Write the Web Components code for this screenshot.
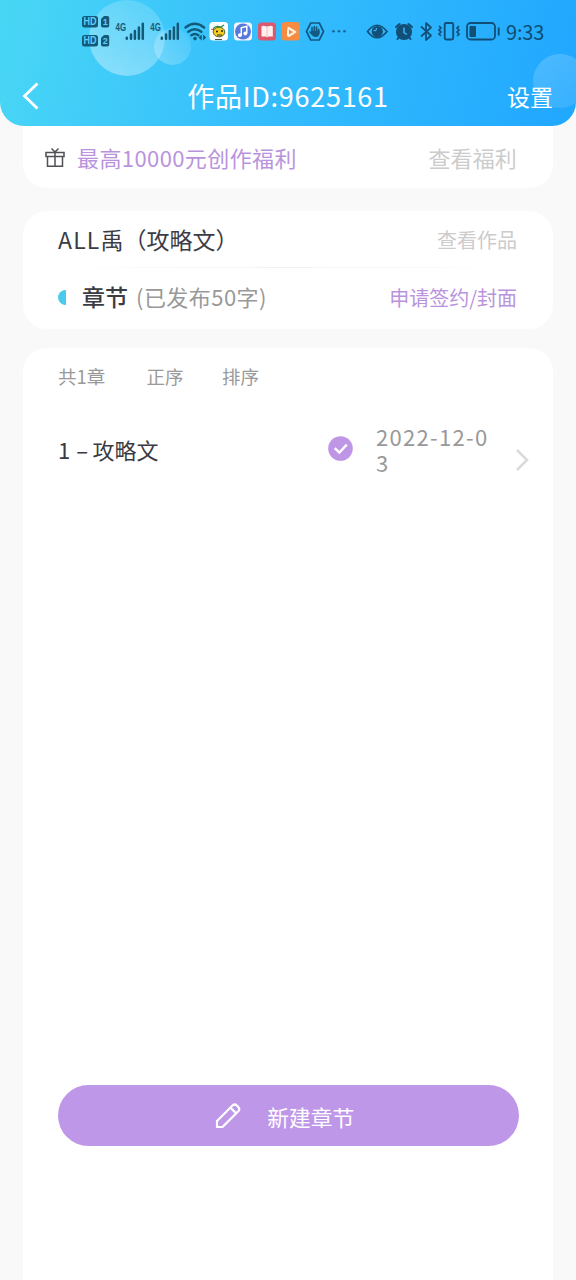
<!DOCTYPE html>
<html lang="zh-CN">
<head>
<meta charset="utf-8">
<title>作品</title>
<style>
html,body{margin:0;height:100%;background:#f9f9f9}
body{font-family:"Noto Sans CJK SC","Noto Sans",sans-serif;color:#3c3c44;overflow:hidden}
</style>
</head>
<body>
<work-page></work-page>
<script>
const define=(name,html)=>customElements.define(name,class extends HTMLElement{
  constructor(){super();const t=document.createElement('template');t.innerHTML=html;
    this.attachShadow({mode:'open'}).append(t.content.cloneNode(true));}
});

define('status-bar',`<style>
:host{display:flex;height:64px;padding-left:80px;box-sizing:border-box;align-items:center;color:#104e73}
svg{display:block;width:422px;height:64px;flex:none}
.time{font-size:20px;line-height:24px;margin:0 0 0 4px;letter-spacing:-.2px}
text{font-family:"Liberation Sans",sans-serif;font-weight:700}
</style>
<svg viewBox="80 0 422 64">
 <g fill="#135a78">
  <rect x="82" y="16" width="16" height="11.5" rx="2.5"/><rect x="82" y="35" width="16" height="11.5" rx="2.5"/>
  <path d="M104 16h3.500q1.700 0 1.700 1.700v8.100q0 1.700-1.700 1.700h-4.800q-1.700 0-1.700-1.700V19z"/><path d="M104 35h3.500q1.700 0 1.700 1.700v8.100q0 1.700-1.700 1.700h-4.800q-1.700 0-1.700-1.700V38z"/>
 </g>
 <g fill="#62cdf8"><text x="83.500" y="25.300" font-size="10" textLength="13" lengthAdjust="spacingAndGlyphs">HD</text><text x="83.500" y="44.300" font-size="10" textLength="13" lengthAdjust="spacingAndGlyphs">HD</text><text x="102.700" y="25.200" font-size="9">1</text><text x="102.700" y="44.200" font-size="9">2</text></g>
 <g fill="#135a78"><text x="115.500" y="30.700" font-size="11.500" textLength="10.500" lengthAdjust="spacingAndGlyphs">4G</text><text x="150.300" y="30.700" font-size="11.500" textLength="10.500" lengthAdjust="spacingAndGlyphs">4G</text></g>
 <g stroke="#135a78" stroke-width="2.500" stroke-linecap="round">
  <path d="M126.800 37.700v1M131 34.500v4.200M134.900 31v7.700M138.900 27.500v11.200M142.800 23.800v14.900"/>
  <path d="M161.800 37.700v1M166 34.500v4.200M169.900 31v7.700M173.900 27.500v11.200M177.800 23.800v14.900"/>
 </g>
 <g fill="none" stroke="#135a78" stroke-width="2.400" stroke-linecap="round"><path d="M185.500 27.500q9.300-7.300 18.600 0M188.300 31.700q6.500-4.800 13 0M191.400 35.300q3.500-2.600 7 0"/></g>
 <circle cx="195" cy="38.600" r="1.800" fill="#135a78"/><path d="M201.700 34.500v6l-3.200-3zM203 34.500v6l3.200-3z" fill="#135a78"/>
 <rect x="209.500" y="22" width="18.500" height="18.500" rx="3.500" fill="#fff"/>
 <path d="M215 39.500h7" stroke="#555"/><ellipse cx="219" cy="32" rx="5.800" ry="4.800" fill="#f5cf22" stroke="#52642c"/><path d="M213 30q1-5 8-3l3-2" fill="none" stroke="#288b4c" stroke-width="1.300"/><path d="M217 35h5" stroke="#333"/><circle cx="217" cy="31.500" r="1" fill="#222"/><circle cx="222" cy="31" r="1" fill="#222"/><path d="M211 29l2 1" stroke="#e84f4f"/>
 <rect x="234" y="22.500" width="18" height="18" rx="3.500" fill="#f4f5ff"/><circle cx="243" cy="31.500" r="8" fill="#5879dc"/><path d="M241.300 35v-7.300l5.500-1.500v7" fill="none" stroke="#fff" stroke-width="1.500"/><circle cx="239.900" cy="35.200" r="1.900" fill="#fff"/><circle cx="245.300" cy="33.500" r="1.900" fill="#fff"/>
 <rect x="258" y="22.500" width="18" height="18" rx="3.500" fill="#dc596d"/><path d="M261.500 26.500l1.500-.8 4 .8 4-.8 1.800.8v10h-4.500l-1.300.7-1.300-.7h-4.200z" fill="#fff0ef"/><path d="M267 26.500v10" stroke="#eba5ad" stroke-width=".7"/>
 <rect x="281.500" y="22" width="18.500" height="18.500" rx="3.500" fill="#f68b42"/><path d="M288.500 28l6.800 3.900-6.300 4" fill="none" stroke="#fff2df" stroke-width="2.300" stroke-linejoin="round" stroke-linecap="round"/><path d="M288 30v5.500" stroke="#fff2df" stroke-width="2" stroke-linecap="round"/>
 <path d="M310.700 23h8.600l4.200 8.500-4.200 8.500h-8.600l-4.200-8.500z" fill="none" stroke="#135a83" stroke-width="1.700" stroke-linejoin="round"/>
 <path d="M312 33v-5.500M314.300 32v-5.500M316.600 32v-5M318.700 33v-3.500M312 34l-2-2" stroke="#135a83" stroke-width="1.700" stroke-linecap="round"/><path d="M311.200 31h8.300v2.500q-.5 3.500-3.800 3.500-3 0-4.500-3z" fill="#135a83"/>
 <g fill="#176896"><circle cx="333.500" cy="31.300" r="1.300"/><circle cx="339" cy="31.300" r="1.300"/><circle cx="344.500" cy="31.300" r="1.300"/></g>
 <g fill="none" stroke="#124f77" stroke-width="1.700">
  <path d="M367.500 31.500q9.500-12.500 19.500 0-10 12.500-19.500 0z"/><circle cx="377.300" cy="31.500" r="4.700" fill="#124f77"/>
  <path d="M373.500 30.500q3 1 3-2.500" stroke="#38b2fb" stroke-width="1.300"/>
  <circle cx="404" cy="32" r="7.200" fill="#124f77"/><path d="M396 27l3.500-3M412 27l-3.500-3M399 37l-1.500 2M409 37l1.500 2" stroke-width="2" stroke-linecap="round"/><path d="M404 27.500v5l3 2" stroke="#37b2ff" stroke-width="1.500"/>
  <path d="M421 26.500l10 9-5 4.500v-17l5 4.500-10 9" stroke-width="1.700" stroke-linejoin="round"/>
  <rect x="444.700" y="23" width="8.500" height="16.500" rx="1.500" stroke-width="1.900"/><path d="M439 26l2 2-2 2 2 2-2 2 2 2M459 26l-2 2 2 2-2 2 2 2-2 2" stroke-width="1.700"/>
  <rect x="467" y="23" width="28" height="16.500" rx="3.500" stroke-width="1.800"/><path d="M498.700 27.500v8" stroke-width="2"/>
 </g><rect x="469.500" y="26" width="6.500" height="11" rx="1" fill="#124f77"/>
</svg><span class="time">9:33</span>`);

define('nav-bar',`<style>
:host{display:grid;grid-template-columns:1fr auto 1fr;align-items:center;height:62px;color:#fff;padding:0 23px 0 22px}
svg{width:18px;height:30px;display:block}
.t{font-size:27px;line-height:38px;letter-spacing:.72px;white-space:nowrap;padding:2px 0 0 1px}
.s{font-size:23px;line-height:34px;justify-self:end;padding-top:2px}
</style><svg viewBox="0 0 18 30" fill="none" stroke="#fff" stroke-width="2.800"><path d="M15.500 3.500L2.500 16l13 12.500"/></svg><span class="t"><slot></slot></span><span class="s"><slot name="action"></slot></span>`);

define('app-header',`<style>
:host{display:block;position:relative;z-index:1;height:126px;border-radius:0 0 24px 24px;overflow:hidden;background:linear-gradient(103deg,#49d7f5 0%,#36bffc 43%,#20a7ff 100%)}
i{position:absolute;border-radius:50%}
.a{left:89px;top:0;width:76px;height:76px;background:linear-gradient(205deg,#ffffff20,#ffffff66)}
.b{left:154px;top:28px;width:37px;height:37px;background:linear-gradient(230deg,#ffffff10,#ffffff48)}
.c{left:533px;top:54px;width:54px;height:54px;background:linear-gradient(150deg,#ffffff30,#ffffff18)}
status-bar,nav-bar{position:relative}
</style><i class="a"></i><i class="b"></i><i class="c"></i><status-bar></status-bar><nav-bar><slot></slot><slot name="action" slot="action"></slot></nav-bar>`);

define('panel-card',`<style>:host{display:block;box-sizing:border-box;background:#fff;border-radius:24px;margin:0 23px}</style><slot></slot>`);

define('info-row',`<style>
:host{display:flex;align-items:center;justify-content:space-between;white-space:nowrap}
.l{display:flex;align-items:center}
</style><span class="l"><slot></slot></span><slot name="end"></slot>`);

define('chapter-row',`<style>
:host{display:flex;height:78px;color:#3a3a42;font-size:22px;line-height:26px}
.n{width:270px;padding-top:28px;box-sizing:border-box}
.n b{font-weight:400;display:inline-block;width:34.500px;letter-spacing:.6px;white-space:pre}
.ok{width:25px;height:25px;margin-top:28px}
.d{width:118px;margin:15px 0 0 23px;color:#999;letter-spacing:1.3px;word-break:break-all}
.go{width:14px;height:24px;margin:39.500px 0 0 20.500px}
</style><span class="n"><b>1 –</b><slot></slot></span>
<svg class="ok" viewBox="0 0 25 25"><circle cx="12.500" cy="12.500" r="12.300" fill="#bf96e6"/><path d="M6.800 12.200l4.500 4.300 7.500-7.800" fill="none" stroke="#fff" stroke-width="2.400"/></svg>
<span class="d"><slot name="date"></slot></span>
<svg class="go" viewBox="0 0 14 24" fill="none" stroke="#dadada" stroke-width="2.500"><path d="M2 2l10 10L2 22"/></svg>`);

define('create-button',`<style>
:host{display:flex;align-items:center;justify-content:center;height:61px;border-radius:31px;background:#bf97e8;color:#fff;font-size:21.800px;line-height:32px;box-sizing:border-box;padding-right:8px}
svg{width:28px;height:28px;margin-right:25px}
span{margin-top:2px}
</style><svg viewBox="0 0 28 28" fill="none" stroke="#fff" stroke-width="2.200" stroke-linejoin="round"><path d="M3 25v-6L18.500 3.500q2.200-2 4.300 0l1.500 1.500q2 2.200 0 4.200L8.500 25zM16.500 5.700l5.700 5.700"/></svg><span><slot></slot></span>`);

define('work-page',`<style>
:host{display:flex;flex-direction:column;height:1280px;width:576px;overflow:hidden}
.gift{height:62px;border-radius:0 0 24px 24px;padding:1px 36px 0 22px}
.gift info-row{height:60px;font-size:22px}
.gift svg{width:20px;height:21px;margin-right:12px}
.p{color:#b994dd}.g{color:#ccc}
.work{height:118px;margin-top:23px;padding:0 36px 0 35px}
.work info-row:first-child{height:56px}
.work info-row:last-child{height:58px}
.line{height:1px;background:linear-gradient(90deg,#fff,#f2f2f2 50%,#fff)}
.title{font-size:23px}.title b{font-weight:400;letter-spacing:1.2px}
.half{width:8px;height:15px;border-radius:8px 0 0 8px;background:#4acbed;margin-right:16px}
.chap{font-size:23px;font-weight:500;margin-top:-2px}
.count{font-size:22px;color:#999;letter-spacing:.45px;margin:-3px 0 0 8px}
.sm{font-size:20px}
.list{flex:1;margin-top:19px;border-radius:24px 24px 0 0;padding:0 0 0 35px;display:flex;flex-direction:column}
.tabs{height:60px;display:flex;align-items:center;font-size:18.500px;color:#999;box-sizing:border-box;padding-bottom:5px}
.tabs span:nth-child(1){width:88.500px}.tabs span:nth-child(2){width:75.500px}
create-button{margin:599px 34.500px 0 0}
</style>
<app-header>作品ID:9625161<span slot="action">设置</span></app-header>
<panel-card class="gift"><info-row><svg viewBox="0 0 20 21" fill="none" stroke="#505055" stroke-width="1.500"><path d="M1 5.500h18v4H1zM2.500 9.500v9.700h15V9.500M10 5.500v13.700M6.500 1.500L10 5l3.500-3.500"/></svg><span class="p" style="letter-spacing:.4px">最高10000元创作福利</span><span slot="end" class="g" style="letter-spacing:.15px">查看福利</span></info-row></panel-card>
<panel-card class="work"><info-row><span class="title"><b>ALL</b>禹（攻略文）</span><span slot="end" class="g sm">查看作品</span></info-row><div class="line"></div><info-row><i class="half"></i><span class="chap">章节</span><span class="count">(已发布50字)</span><span slot="end" class="p sm">申请签约/封面</span></info-row></panel-card>
<panel-card class="list"><div class="tabs"><span>共1章</span><span>正序</span><span>排序</span></div><chapter-row>攻略文<span slot="date">2022-12-03</span></chapter-row><create-button>新建章节</create-button></panel-card>`);
</script>
</body>
</html>
